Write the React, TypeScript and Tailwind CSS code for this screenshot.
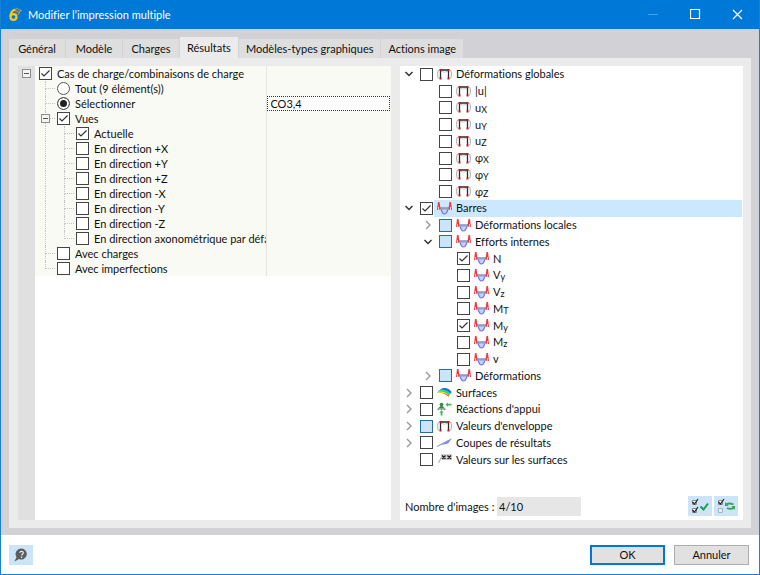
import {useState} from 'react';
import type {ReactNode} from 'react';
import clsx from 'clsx';

type CheckState = 'on' | 'off' | 'partial';
type IconName = 'frame' | 'beam' | 'surface' | 'support' | 'section' | 'values';

interface ViewNode {
    id: string;
    label: string;
    depth: 0 | 1 | 2;
    kind?: 'radio';
    checked?: boolean;
    expander?: boolean;
    last?: boolean;
}

interface ResultNode {
    id: string;
    label: string;
    sub?: string;
    depth: 0 | 1 | 2;
    state?: CheckState;
    open?: boolean;
    icon: IconName;
    selected?: boolean;
}

const TABS = ['Général', 'Modèle', 'Charges', 'Résultats', 'Modèles-types graphiques', 'Actions image'];

const VIEW_NODES: ViewNode[] = [
    {id: 'cases', label: 'Cas de charge/combinaisons de charge', depth: 0, checked: true},
    {id: 'all', label: 'Tout (9 élément(s))', depth: 1, kind: 'radio'},
    {id: 'select', label: 'Sélectionner', depth: 1, kind: 'radio', checked: true},
    {id: 'views', label: 'Vues', depth: 1, checked: true, expander: true},
    {id: 'current', label: 'Actuelle', depth: 2, checked: true},
    {id: 'px', label: 'En direction +X', depth: 2},
    {id: 'py', label: 'En direction +Y', depth: 2},
    {id: 'pz', label: 'En direction +Z', depth: 2},
    {id: 'mx', label: 'En direction -X', depth: 2},
    {id: 'my', label: 'En direction -Y', depth: 2},
    {id: 'mz', label: 'En direction -Z', depth: 2},
    {id: 'axo', label: 'En direction axonométrique par défa', depth: 2, last: true},
    {id: 'loads', label: 'Avec charges', depth: 1},
    {id: 'imperfections', label: 'Avec imperfections', depth: 1, last: true},
];

const RESULT_NODES: ResultNode[] = [
    {id: 'global', label: 'Déformations globales', depth: 0, open: true, icon: 'frame'},
    {id: 'u', label: '|u|', depth: 1, icon: 'frame'},
    {id: 'ux', label: 'u', sub: 'X', depth: 1, icon: 'frame'},
    {id: 'uy', label: 'u', sub: 'Y', depth: 1, icon: 'frame'},
    {id: 'uz', label: 'u', sub: 'Z', depth: 1, icon: 'frame'},
    {id: 'phix', label: 'φ', sub: 'X', depth: 1, icon: 'frame'},
    {id: 'phiy', label: 'φ', sub: 'Y', depth: 1, icon: 'frame'},
    {id: 'phiz', label: 'φ', sub: 'Z', depth: 1, icon: 'frame'},
    {id: 'members', label: 'Barres', depth: 0, open: true, icon: 'beam', state: 'on', selected: true},
    {id: 'local', label: 'Déformations locales', depth: 1, open: false, icon: 'beam', state: 'partial'},
    {id: 'forces', label: 'Efforts internes', depth: 1, open: true, icon: 'beam', state: 'partial'},
    {id: 'n', label: 'N', depth: 2, icon: 'beam', state: 'on'},
    {id: 'vy', label: 'V', sub: 'y', depth: 2, icon: 'beam'},
    {id: 'vz', label: 'V', sub: 'z', depth: 2, icon: 'beam'},
    {id: 'mt', label: 'M', sub: 'T', depth: 2, icon: 'beam'},
    {id: 'm-y', label: 'M', sub: 'y', depth: 2, icon: 'beam', state: 'on'},
    {id: 'm-z', label: 'M', sub: 'z', depth: 2, icon: 'beam'},
    {id: 'v', label: 'v', depth: 2, icon: 'beam'},
    {id: 'strains', label: 'Déformations', depth: 1, open: false, icon: 'beam', state: 'partial'},
    {id: 'surfaces', label: 'Surfaces', depth: 0, open: false, icon: 'surface'},
    {id: 'reactions', label: "Réactions d'appui", depth: 0, open: false, icon: 'support'},
    {id: 'envelope', label: "Valeurs d'enveloppe", depth: 0, open: false, icon: 'frame', state: 'partial'},
    {id: 'sections', label: 'Coupes de résultats', depth: 0, open: false, icon: 'section'},
    {id: 'surface-values', label: 'Valeurs sur les surfaces', depth: 0, icon: 'values'},
];

const RESULT_INDENT = ['pl-[4px]', 'pl-[23px]', 'pl-[41px]'];

function FrameIcon() {
    return (
        <svg width="15" height="13" viewBox="0 0 15 13" fill="none" className="shrink-0">
            <path d="M1.500 2C.3 4 .3 8.500 1.500 10.500M13.500 2C14.700 4 14.700 8.500 13.500 10.500" stroke="#a8a8a8"/>
            <path d="M4 3Q7.500 5.500 11 3" stroke="#c8c8c8"/>
            <path d="M3.500 10.500V2H11.500V10.500" stroke="#2a2a2a" strokeWidth="1.300"/>
            <path d="M2.500 1h2v2h-2zM10.500 1h2v2h-2zM2.500 9.500h2v2h-2zM10.500 9.500h2v2h-2z" fill="#c4161c"/>
        </svg>
    );
}

function BeamIcon() {
    return (
        <svg width="15" height="13" viewBox="0 0 15 13" fill="none" className="shrink-0">
            <path d="M3.500 6C4.500 8 4.800 12 7.500 12S10.500 8 11.500 6Z" fill="#c8cffc" stroke="#6a72ee" strokeWidth="1.200"/>
            <path d="M2 6.500H13" stroke="#8fa0bb" strokeWidth="2"/>
            <path d="M0 8L1 0H2.500L3.500 6.500L2 8ZM15 8L14 0H12.500L11.500 6.500L13 8Z" fill="#ee3a40"/>
            <path d="M1.500 5V8M13.500 5V8" stroke="#ffc4c4"/>
        </svg>
    );
}

function SurfaceIcon() {
    return (
        <svg width="15" height="13" viewBox="0 0 15 13" className="shrink-0">
            <path d="M0 6.500Q4 1.500 8 2Q12 2.500 14.500 6L11.500 10.500Q7 6.500 0 6.500Z" fill="#2fd04a"/>
            <path d="M3 3.500Q6 1.500 8.500 2Q12 2.500 14.500 6L13.500 7.500Q9 3 3 3.500Z" fill="#1f6df0"/>
            <path d="M2.500 4Q9 3.200 13.500 7.500L13 8.300Q8 4.500 2 4.800Z" fill="#1fd0e0"/>
            <path d="M0 6.500L1.500 5.200Q8 5 12.300 9.200L11.500 10.500Q7 6.500 0 6.500Z" fill="#f8e01c"/>
            <path d="M6 7Q9.500 7.500 12 9.700L11.500 10.500Q9 8 6 7Z" fill="#f0421c"/>
        </svg>
    );
}

function SupportIcon() {
    return (
        <svg width="15" height="14" viewBox="0 0 15 14" className="shrink-0">
            <circle cx="4.500" cy="2.500" r="1.800" fill="#2f8f3c"/>
            <path d="M4.500 3L8 6.500H1Z" fill="#2f8f3c"/>
            <path d="M.5 7.200H8.500" stroke="#444" strokeDasharray="2 1"/>
            <path d="M8.500 2.500L11 .5V1.700H14.500V3.500H11V4.700Z" fill="#4bb35a"/>
            <path d="M4.500 8.200L6.700 10.500H5.400V13.500H3.600V10.500H2.300Z" fill="#4bb35a"/>
        </svg>
    );
}

function SectionIcon() {
    return (
        <svg width="15" height="13" viewBox="0 0 15 13" className="shrink-0">
            <path d="M2 9.500L14 3Q12 8.500 7.500 8.300Q4.500 8.500 2 9.500Z" fill="#7f8cf8"/>
            <path d="M0 10.500L14.500 2.800" stroke="#8a93b8"/>
        </svg>
    );
}

function ValuesIcon() {
    return (
        <svg width="15" height="13" viewBox="0 0 15 13" className="shrink-0">
            <path d="M3.500 1H15V7H5Z" fill="#d6d6d6"/>
            <path d="M1.500 10L4.500 4" stroke="#a5a5a5"/>
            <path d="M5 2.500L8.500 6M8.500 2.500L5 6M10.500 2.500L14 6M14 2.500L10.500 6" stroke="#1d1d1d" strokeWidth="1.400"/>
        </svg>
    );
}

const ICONS: Record<IconName, () => ReactNode> = {
    frame: FrameIcon,
    beam: BeamIcon,
    surface: SurfaceIcon,
    support: SupportIcon,
    section: SectionIcon,
    values: ValuesIcon,
};

function Checkbox({id, state = 'off'}: {id: string; state?: CheckState}) {
    return (
        <span className="relative flex size-[13px] shrink-0">
            <input
                id={id}
                type="checkbox"
                defaultChecked={state === 'on'}
                className={clsx(
                    'peer size-[13px] appearance-none border',
                    state === 'partial' ? 'border-[#2a6ba3] bg-[#cce4f7]' : 'border-[#444] bg-white',
                )}
            />
            <svg viewBox="0 0 13 13" fill="none" className="pointer-events-none absolute inset-0 hidden peer-checked:block">
                <path d="M2.500 6.500L5 9L10.500 3.500" stroke="#333" strokeWidth="1.200"/>
            </svg>
        </span>
    );
}

function Radio({id, checked}: {id: string; checked?: boolean}) {
    return (
        <input
            id={id}
            type="radio"
            name="load-cases"
            defaultChecked={checked}
            className="size-[13px] shrink-0 appearance-none rounded-full border border-[#555] bg-white checked:bg-[#222] checked:shadow-[inset_0_0_0_2px_#fff]"
        />
    );
}

function Expander() {
    return (
        <button aria-label="Réduire" className="flex size-[9px] items-center justify-center border border-[#8c8c8c] bg-[#f4f4f4]">
            <span className="h-px w-[5px] bg-[#555]"/>
        </button>
    );
}

function Connector({last, expander}: {last?: boolean; expander?: boolean}) {
    return (
        <span className="relative flex w-3 shrink-0 flex-col self-stretch">
            <span className="h-2 w-[10px] border-b border-l border-dotted border-[#c4c4c4]"/>
            <span className={clsx('flex-1', !last && 'border-l border-dotted border-[#c4c4c4]')}/>
            {expander && <span className="absolute top-[3px] -left-1"><Expander/></span>}
        </span>
    );
}

function ViewRow({node}: {node: ViewNode}) {
    return (
        <li className={clsx('flex h-[15px] items-center', node.depth === 0 ? 'pl-1' : 'pl-[10px]')}>
            {node.depth === 2 && <span className="w-[19px] shrink-0 self-stretch border-l border-dotted border-[#c4c4c4]"/>}
            {node.depth > 0 && <Connector last={node.last} expander={node.expander}/>}
            {node.kind === 'radio'
                ? <Radio id={node.id} checked={node.checked}/>
                : <Checkbox id={node.id} state={node.checked ? 'on' : 'off'}/>}
            <label htmlFor={node.id} className="pl-[5px] whitespace-nowrap">{node.label}</label>
        </li>
    );
}

function ResultRow({node}: {node: ResultNode}) {
    const Icon = ICONS[node.icon];

    return (
        <li className={clsx('flex items-center', RESULT_INDENT[node.depth])}>
            <span className="flex w-4 shrink-0">
                {node.open !== undefined && (
                    <button aria-label={node.open ? 'Réduire' : 'Développer'}>
                        <svg width="10" height="10" viewBox="0 0 10 10" fill="none">
                            {node.open
                                ? <path d="M1.500 3L5 6.500L8.500 3" stroke="#333" strokeWidth="1.500"/>
                                : <path d="M3 1L7 5L3 9" stroke="#999" strokeWidth="1.400"/>}
                        </svg>
                    </button>
                )}
            </span>
            <Checkbox id={node.id} state={node.state}/>
            <label
                htmlFor={node.id}
                className={clsx('ml-px flex flex-1 items-center gap-1 self-stretch pl-[3px] whitespace-nowrap', node.selected && 'bg-[#cce8ff]')}
            >
                <Icon/>
                <span className="flex items-end leading-4">
                    {node.label}
                    {node.sub && <span className="text-[9px] leading-[13px]">{node.sub}</span>}
                </span>
            </label>
        </li>
    );
}

function TitleBar() {
    return (
        <header className="flex h-[29px] items-center bg-[#0078d7] pr-px pl-[7px] text-white">
            <svg width="15" height="15" viewBox="0 0 15 15" fill="none">
                <path d="M4 4L8 1L13 4L10 8Z" fill="#5f6f7c"/>
                <path d="M8 1L14 4M6 2.500L12 6M10 8L13 3" stroke="#b9a77c" strokeWidth=".8"/>
                <path d="M7.500 2.500C4 3.500 2.500 6 2.500 9.500" stroke="#f6c915" strokeWidth="2.200"/>
                <ellipse cx="5.500" cy="10" rx="3" ry="2.800" stroke="#f6c915" strokeWidth="2.200"/>
            </svg>
            <h1 className="ml-[5px] flex-1">Modifier l’impression multiple</h1>
            <button aria-label="Réduire la fenêtre" className="flex h-full w-[42px] items-center justify-center">
                <svg width="11" height="11" viewBox="0 0 11 11"><path d="M0 5.500H10" stroke="#4c9fe2"/></svg>
            </button>
            <button aria-label="Agrandir" className="flex h-full w-[42px] items-center justify-center">
                <svg width="11" height="11" viewBox="0 0 11 11" fill="none"><path d="M.5.500H9.500V9.500H.5Z" stroke="#fff" strokeWidth="1.200"/></svg>
            </button>
            <button aria-label="Fermer" className="flex h-full w-[42px] items-center justify-center">
                <svg width="11" height="11" viewBox="0 0 11 11"><path d="M1 1L10 10M10 1L1 10" stroke="#fff" strokeWidth="1.200"/></svg>
            </button>
        </header>
    );
}

function ViewPanel() {
    return (
        <section className="flex flex-[373_1_0] bg-white">
            <div className="flex w-[17px] shrink-0 flex-col items-center bg-[#e0e0e0] pt-[3px]">
                <Expander/>
            </div>
            <div className="flex min-w-0 flex-1 self-start">
                <ul className="w-[65%] bg-[#f9faf3]">
                    {VIEW_NODES.map((node) => <ViewRow key={node.id} node={node}/>)}
                </ul>
                {/* own background, so that long labels end at the column line */}
                <div className="flex-1 border-l border-[#e4e4e4] bg-[#f9faf3] pt-[30px] pr-px">
                    <input
                        aria-label="Cas sélectionnés"
                        defaultValue="CO3,4"
                        className="block h-[15px] w-full border border-dotted border-[#333] bg-white pl-[2px] outline-none"
                    />
                </div>
            </div>
        </section>
    );
}

function ResultPanel() {
    return (
        <section className="flex flex-[343_1_0] flex-col bg-white">
            <ul className="grid h-[402px] auto-rows-fr pr-px">
                {RESULT_NODES.map((node) => <ResultRow key={node.id} node={node}/>)}
            </ul>
            <div className="mt-auto flex items-center gap-[2px] pr-[5px] pb-1 pl-[5px]">
                <label htmlFor="image-count" className="w-[90px] whitespace-nowrap">Nombre d'images :</label>
                <input id="image-count" readOnly value="4/10" className="h-[19px] w-[84px] bg-[#e6e6e6] pl-[2px] outline-none"/>
                <button aria-label="Tout sélectionner" className="ml-auto flex h-5 w-6 items-center justify-center bg-[#cce4f7]">
                    <svg width="20" height="16" viewBox="0 0 20 16" fill="none">
                        <path d="M2.500 2.500H6.500V6.500H2.500ZM2.500 10.500H6.500V14.500H2.500Z" fill="#fff" stroke="#8a8a8a"/>
                        <path d="M2.500 4L4.500 6L8 1M2.500 12L4.500 14L8 9" stroke="#222" strokeWidth="1.200"/>
                        <path d="M10.500 8.500L13.500 11.500L18 5.500" stroke="#18a04a" strokeWidth="2"/>
                    </svg>
                </button>
                <button aria-label="Inverser la sélection" className="flex h-5 w-6 items-center justify-center bg-[#cce4f7]">
                    <svg width="20" height="16" viewBox="0 0 20 16" fill="none">
                        <path d="M2.500 2.500H6.500V6.500H2.500Z" fill="#fff" stroke="#8a8a8a"/>
                        <path d="M2.500 10.500H6.500V14.500H2.500Z" fill="#e6eff6" stroke="#aab4bc"/>
                        <path d="M2.500 4L4.500 6L8 1" stroke="#222" strokeWidth="1.200"/>
                        <path d="M10 6.500Q13 4.500 17.500 6.500M18 9.500Q15 12 11 10" stroke="#3aa55a" strokeWidth="1.800"/>
                        <path d="M9 4V8H12.500ZM19 12V8H15.500Z" fill="#3aa55a"/>
                    </svg>
                </button>
            </div>
        </section>
    );
}

export default function App() {
    const [activeTab, setActiveTab] = useState('Résultats');

    return (
        <div className="flex min-h-screen flex-col border border-t-0 border-[#1b7fd6] bg-white font-[Lato,'Open_Sans',sans-serif] text-[11px] leading-[15px] text-[#111] [font-variant-ligatures:none]">
            <TitleBar/>

            <main className="flex flex-1 flex-col bg-[#d1d1d6] px-2 pt-2 pb-[7px]">
                <nav className="flex items-end gap-px" role="tablist">
                    {TABS.map((tab) => (
                        <button
                            key={tab}
                            role="tab"
                            aria-selected={tab === activeTab}
                            onClick={() => setActiveTab(tab)}
                            className={clsx(
                                'min-w-14 px-[7px] whitespace-nowrap',
                                tab === activeTab ? 'h-[21px] bg-[#ebebeb]' : 'h-[19px] bg-[#dedede]',
                            )}
                        >
                            {tab}
                        </button>
                    ))}
                </nav>
                <div className="flex flex-1 gap-[9px] bg-[#ebebeb] py-2 pr-2 pl-[9px]">
                    <ViewPanel/>
                    <ResultPanel/>
                </div>
            </main>

            <footer className="flex items-center gap-[9px] pt-[10px] pr-[10px] pb-[9px] pl-2">
                <button aria-label="Aide" className="mr-auto flex h-5 w-6 items-center justify-center bg-[#cce4f7]">
                    <svg width="14" height="14" viewBox="0 0 14 14">
                        <path d="M7.500 .5A5.500 5.500 0 1 1 5 11L.5 13.500L2.500 9A5.500 5.500 0 0 1 7.500 .5Z" fill="#5c5c5c"/>
                        <path d="M5.800 4.800C6 2.800 9.400 2.900 9.300 4.900C9.200 6.200 7.600 6.200 7.600 7.600M7.600 8.600V9.900" fill="none" stroke="#e4eef6" strokeWidth="1.200"/>
                    </svg>
                </button>
                <button className="h-5 w-[75px] border-2 border-[#0078d7] bg-[#e1e1e1] leading-4">OK</button>
                <button className="h-5 w-[75px] border border-[#adadad] bg-[#e1e1e1] leading-4">Annuler</button>
            </footer>
        </div>
    );
}
